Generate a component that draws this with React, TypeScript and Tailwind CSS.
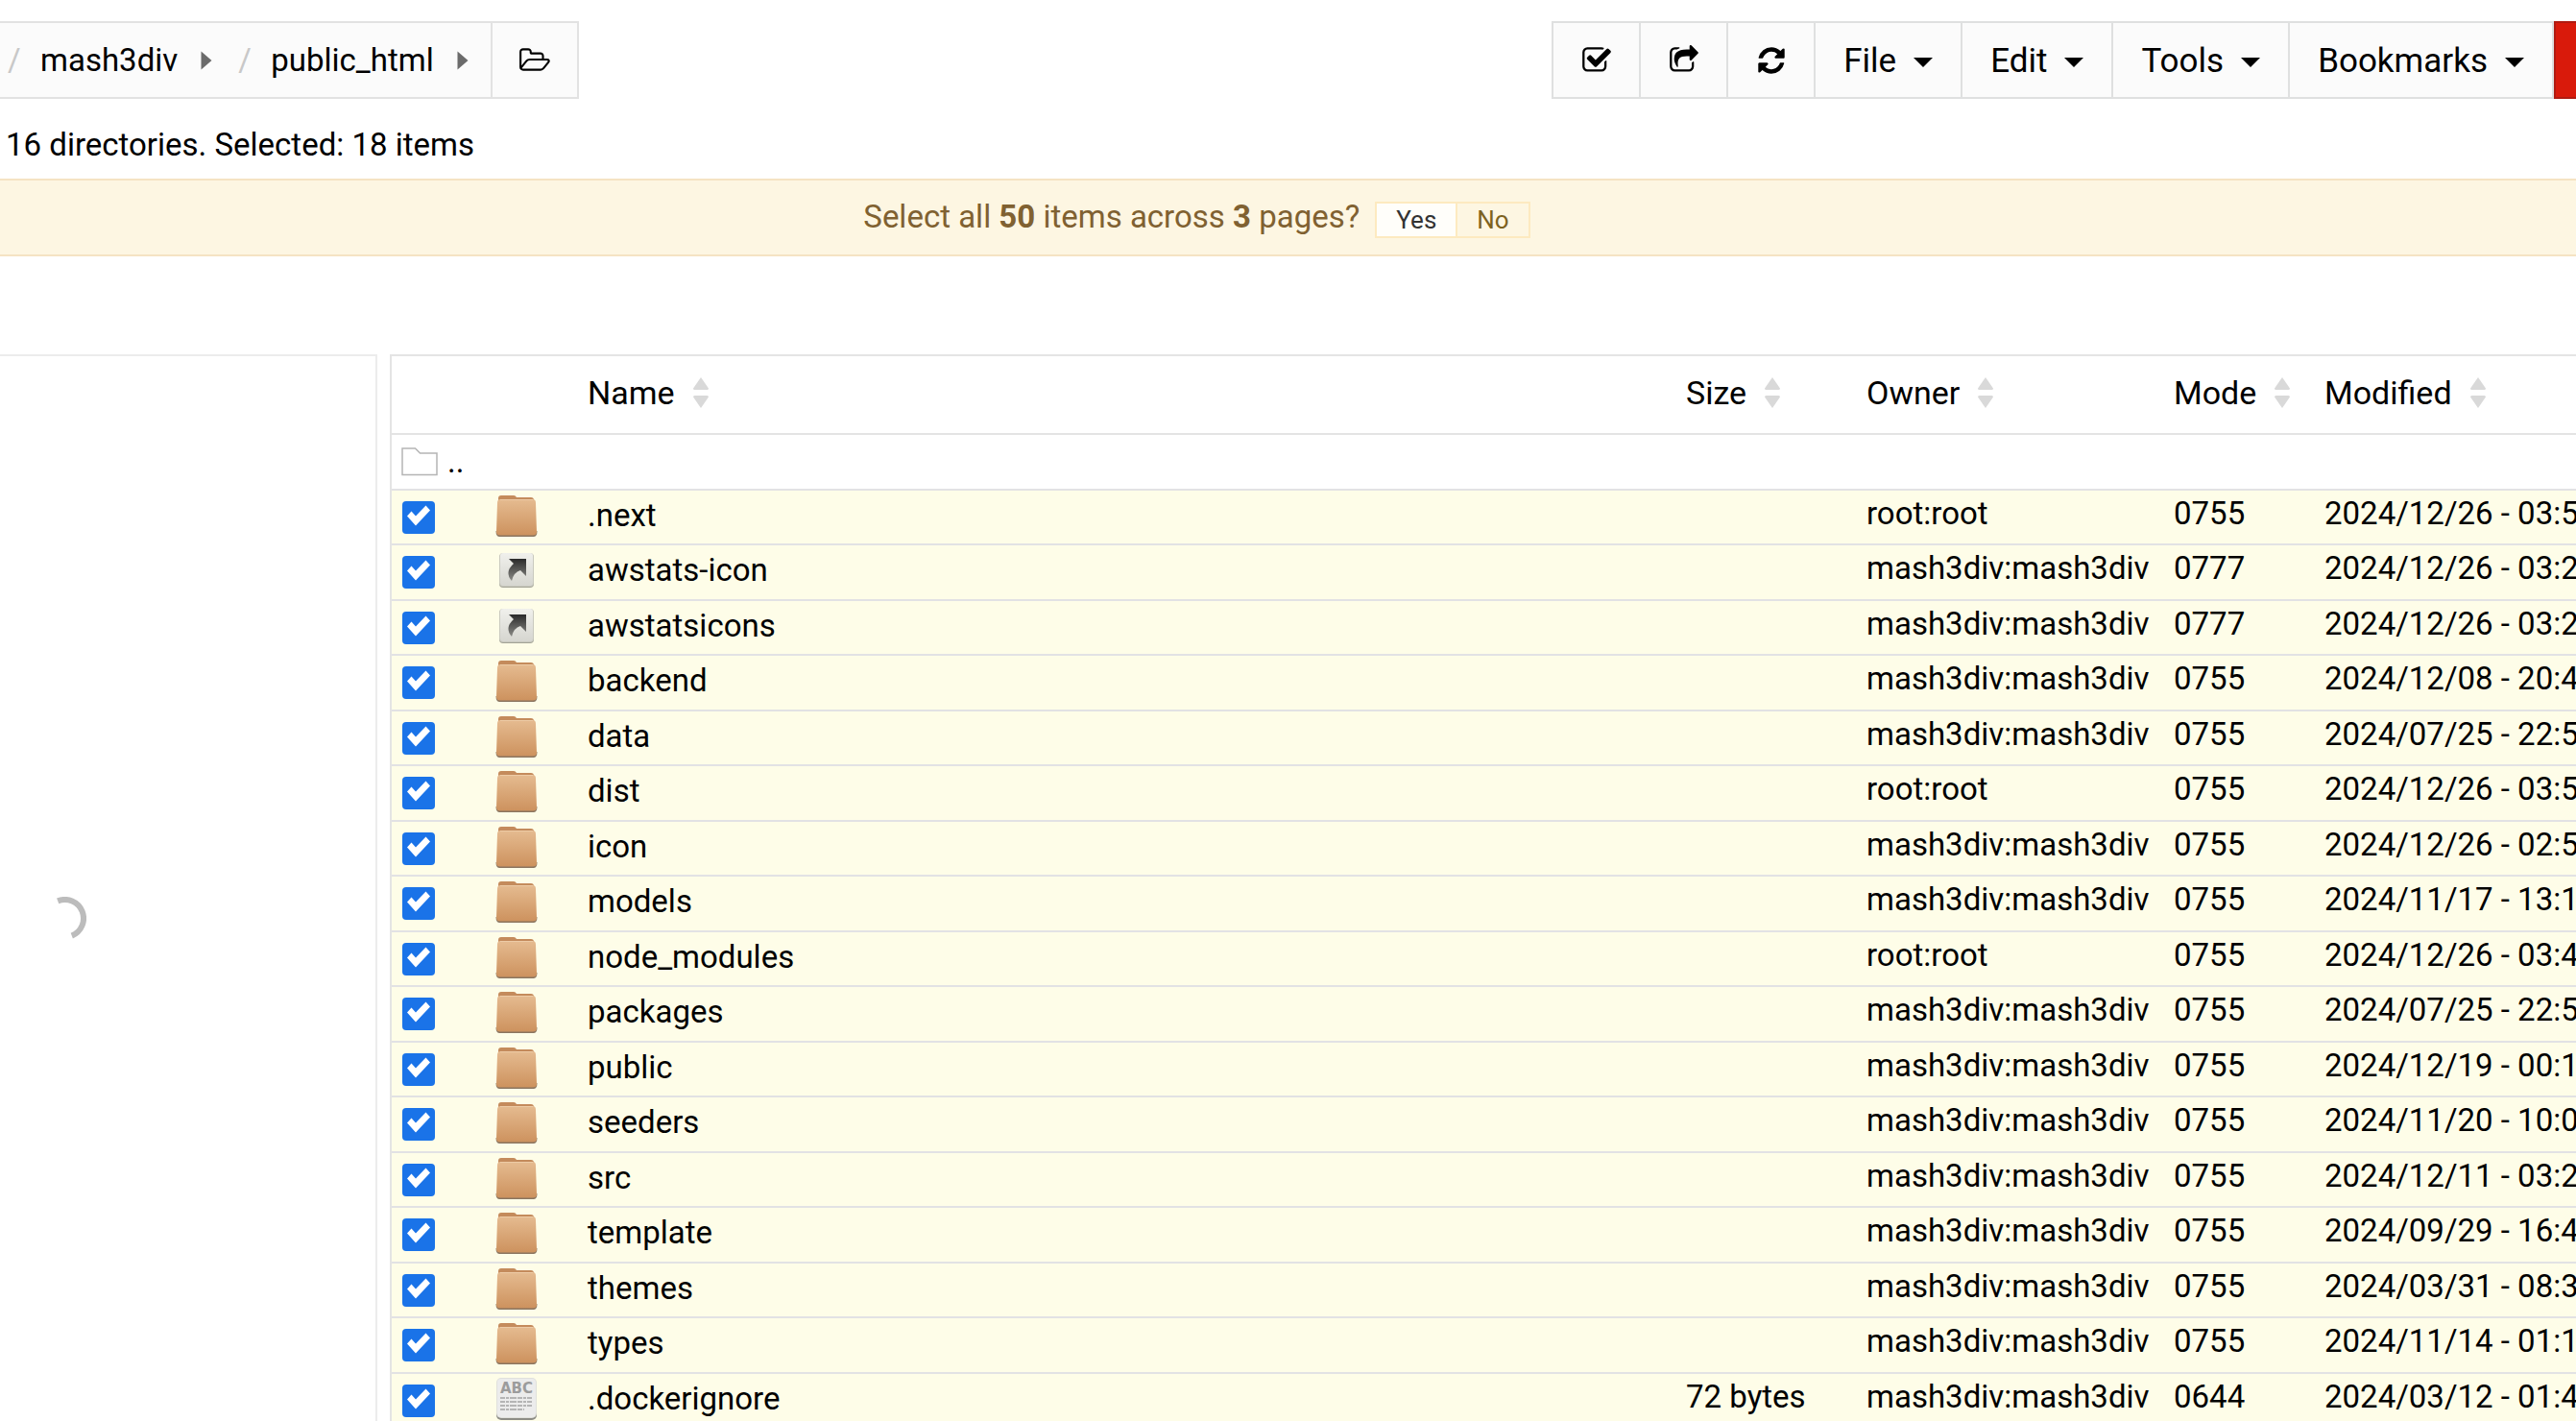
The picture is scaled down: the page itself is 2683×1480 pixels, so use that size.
import React from "react";

type Kind = "folder" | "link" | "text";
type Entry = { kind: Kind; name: string; size?: string; owner: string; mode: string; modified: string };

const me = "mash3div:mash3div";
const root = "root:root";

const entries: Entry[] = [
  { kind: "folder", name: ".next", owner: root, mode: "0755", modified: "2024/12/26 - 03:50" },
  { kind: "link", name: "awstats-icon", owner: me, mode: "0777", modified: "2024/12/26 - 03:26" },
  { kind: "link", name: "awstatsicons", owner: me, mode: "0777", modified: "2024/12/26 - 03:26" },
  { kind: "folder", name: "backend", owner: me, mode: "0755", modified: "2024/12/08 - 20:41" },
  { kind: "folder", name: "data", owner: me, mode: "0755", modified: "2024/07/25 - 22:50" },
  { kind: "folder", name: "dist", owner: root, mode: "0755", modified: "2024/12/26 - 03:50" },
  { kind: "folder", name: "icon", owner: me, mode: "0755", modified: "2024/12/26 - 02:53" },
  { kind: "folder", name: "models", owner: me, mode: "0755", modified: "2024/11/17 - 13:13" },
  { kind: "folder", name: "node_modules", owner: root, mode: "0755", modified: "2024/12/26 - 03:46" },
  { kind: "folder", name: "packages", owner: me, mode: "0755", modified: "2024/07/25 - 22:51" },
  { kind: "folder", name: "public", owner: me, mode: "0755", modified: "2024/12/19 - 00:17" },
  { kind: "folder", name: "seeders", owner: me, mode: "0755", modified: "2024/11/20 - 10:02" },
  { kind: "folder", name: "src", owner: me, mode: "0755", modified: "2024/12/11 - 03:21" },
  { kind: "folder", name: "template", owner: me, mode: "0755", modified: "2024/09/29 - 16:43" },
  { kind: "folder", name: "themes", owner: me, mode: "0755", modified: "2024/03/31 - 08:33" },
  { kind: "folder", name: "types", owner: me, mode: "0755", modified: "2024/11/14 - 01:19" },
  { kind: "text", name: ".dockerignore", size: "72 bytes", owner: me, mode: "0644", modified: "2024/03/12 - 01:43" },
];

const CheckSquare = () => (
  <svg className="size-8" viewBox="0 0 1792 1792" fill="currentColor" aria-hidden="true">
    <path d="M1472 930v318q0 119-84.5 203.5t-203.5 84.5h-832q-119 0-203.5-84.5t-84.5-203.5v-832q0-119 84.5-203.5t203.5-84.5h832q63 0 117 25 15 7 18 23 3 17-9 29l-49 49q-10 10-23 10-3 0-9-2-23-6-45-6h-832q-66 0-113 47t-47 113v832q0 66 47 113t113 47h832q66 0 113-47t47-113v-254q0-13 9-22l64-64q10-10 23-10 6 0 12 3 20 8 20 29zm231-489l-814 814q-24 24-57 24t-57-24l-430-430q-24-24-24-57t24-57l110-110q24-24 57-24t57 24l263 263 647-647q24-24 57-24t57 24l110 110q24 24 24 57t-24 57z" />
  </svg>
);

const ShareSquare = () => (
  <svg className="size-8" viewBox="0 0 1792 1792" fill="currentColor" aria-hidden="true">
    <path d="M1472 989v259q0 119-84.5 203.5t-203.5 84.5h-832q-119 0-203.5-84.5t-84.5-203.5v-832q0-119 84.5-203.5t203.5-84.5h255q13 0 22.5 9.5t9.5 22.5q0 27-26 32-77 26-133 60-10 4-16 4h-112q-66 0-113 47t-47 113v832q0 66 47 113t113 47h832q66 0 113-47t47-113v-214q0-19 18-29 28-13 54-37 16-16 35-8 21 9 21 31zm237-496l-384 384q-18 19-45 19-12 0-25-5-39-17-39-59v-192h-160q-323 0-438 131-119 137-74 473 3 23-20 34-8 2-12 2-16 0-26-13-10-14-21-31t-39.5-68.5-49.5-99.5-38.5-114-17.5-122q0-49 3.5-91t14-90 28-88 47-81.5 68.5-74 94.5-61.5 124.5-48.5 159.5-30.5 196.5-11h160v-192q0-42 39-59 13-5 25-5 26 0 45 19l384 384q19 19 19 45t-19 45z" />
  </svg>
);

const Refresh = () => (
  <svg className="size-8" viewBox="-128 -128 1792 1792" fill="currentColor" aria-hidden="true">
    <path d="M1511 928q0 5-1 7-64 268-268 434.5t-478 166.5q-146 0-282.5-55t-243.5-157l-129 129q-19 19-45 19t-45-19-19-45v-448q0-26 19-45t45-19h448q26 0 45 19t19 45-19 45l-137 137q71 66 161 102t187 36q134 0 250-65t186-179q11-17 53-117 8-23 30-23h192q13 0 22.5 9.5t9.5 22.5zm25-800v448q0 26-19 45t-45 19h-448q-26 0-45-19t-19-45 19-45l138-138q-148-137-349-137-134 0-250 65t-186 179q-11 17-53 117-8 23-30 23h-199q-13 0-22.5-9.5t-9.5-22.5v-7q65-268 270-434.5t480-166.5q146 0 284 55.5t245 156.5l130-129q19-19 45-19t45 19 19 45z" />
  </svg>
);

const FolderOpen = () => (
  <svg className="h-[30px] w-[34px]" viewBox="0 0 2048 1792" fill="currentColor" aria-hidden="true">
    <path d="M1845 931q0-35-53-35h-1088q-40 0-85.5 21.5t-71.5 52.5l-294 363q-18 24-18 40 0 35 53 35h1088q40 0 86-22t71-53l294-363q18-22 18-39zm-1141-163h768v-160q0-40-28-68t-68-28h-576q-40 0-68-28t-28-68v-64q0-40-28-68t-68-28h-320q-40 0-68 28t-28 68v853l256-315q44-53 116-87.5t140-34.5zm1269 163q0 62-46 120l-295 363q-43 53-116 87.5t-140 34.5h-1088q-92 0-158-66t-66-158v-960q0-92 66-158t158-66h320q92 0 158 66t66 158v32h544q92 0 158 66t66 158v160h192q54 0 99 24.5t67 70.5q15 32 15 68z" />
  </svg>
);

const CaretRight = () => (
  <svg className="h-5 w-3" viewBox="0 0 12 20" fill="#6b6b6b" aria-hidden="true">
    <path d="M0.5 0.5 11.5 10 0.5 19.5z" />
  </svg>
);

const CaretDown = () => (
  <svg className="mt-[2px] h-[10px] w-5" viewBox="0 0 20 10" fill="currentColor" aria-hidden="true">
    <path d="M0 0h20L10 10z" />
  </svg>
);

const SortIcon = () => (
  <svg className="h-8 w-4" viewBox="0 0 16 32" fill="#d9d9d9" aria-hidden="true">
    <path d="M8 0 16 11.500Q16 13 14.500 13H1.500Q0 13 0 11.500zM8 32 16 20.500Q16 19 14.500 19H1.500Q0 19 0 20.500z" />
  </svg>
);

const FolderIcon = () => (
  <svg className="size-[44px]" viewBox="0 0 44 44" aria-hidden="true">
    <defs>
      <linearGradient id="folder-face" x1="0" y1="0" x2="0" y2="1">
        <stop offset="0" stopColor="#e5bb90" />
        <stop offset="1" stopColor="#cd925e" />
      </linearGradient>
    </defs>
    <path d="M0.500 38q0 6 4 6h35q4 0 4-6z" fill="#8a7560" />
    <path d="M3 8V4q0-3 3-3h13q2 0 3 2h15q3 0 3 3v3z" fill="#c48b5c" />
    <path d="M5 5h34q3 0 3 4l1 30q0 3.500-4 3.500H5q-4 0-4-3.500L2 9q0-4 3-4z" fill="url(#folder-face)" />
    <path d="M5 5.500h34" stroke="#edcba6" strokeWidth="1" />
  </svg>
);

const LinkIcon = () => (
  <svg className="size-[44px]" viewBox="0 0 44 44" aria-hidden="true">
    <defs>
      <linearGradient id="link-face" x1="0" y1="0" x2="0" y2="1">
        <stop offset="0" stopColor="#f0f0ec" />
        <stop offset="1" stopColor="#d6d6d0" />
      </linearGradient>
      <linearGradient id="link-arrow" x1="0" y1="0" x2="0" y2="1">
        <stop offset="0" stopColor="#2a2a2a" />
        <stop offset="1" stopColor="#8a8a86" />
      </linearGradient>
    </defs>
    <rect x="4" y="5" width="36" height="35" rx="4" fill="#a3a396" />
    <rect x="4" y="4" width="36" height="35" rx="4" fill="#c9c9bf" />
    <rect x="5" y="4" width="34" height="34" rx="3" fill="url(#link-face)" />
    <path d="M14 10h18v18l-6-6q-7 2-9 11-8-9 2-18z" fill="url(#link-arrow)" />
  </svg>
);

const TextIcon = () => (
  <svg className="size-[44px]" viewBox="0 0 44 44" aria-hidden="true">
    <rect x="1" y="4" width="42" height="40" rx="5" fill="#8d8d86" />
    <rect x="1" y="0" width="42" height="42" rx="5" fill="#e0e0dc" />
    <rect x="2" y="1" width="40" height="40" rx="4" fill="#ececec" />
    <text x="22" y="16" textAnchor="middle" fontFamily="DejaVu Sans" fontSize="15" fontWeight="700" fill="#9c9c9c">
      ABC
    </text>
    <path d="M5 21h33M5 25h33M5 29h33M5 33h25" stroke="#a3a3a3" strokeWidth="1.500" strokeDasharray="5 1 3 1 7 1" />
  </svg>
);

const ParentFolder = () => (
  <svg className="h-[30px] w-[38px]" viewBox="0 0 38 30" fill="none" stroke="#b5b5b5" strokeWidth="1.500" aria-hidden="true">
    <path d="M1 1h13.500l5 5H37v22.500H1z" />
  </svg>
);

const icons: Record<Kind, () => React.JSX.Element> = { folder: FolderIcon, link: LinkIcon, text: TextIcon };

const toolButton = "-ml-[2px] flex items-center border-2 border-[#dfe0e0] bg-[#fbfbfb]";

function Crumb({ name }: { name: string }) {
  return (
    <li className="flex items-center">
      <span className="w-[34px] text-[#c8c8c8]">/</span>
      <a href="#" className="mr-6">{name}</a>
      <button type="button" aria-label={`Browse ${name}`} className="mr-[23px]">
        <CaretRight />
      </button>
    </li>
  );
}

function Menu({ label }: { label: string }) {
  return (
    <button type="button" className={`${toolButton} gap-[18px] px-[29px] pt-[2px] text-[35px]`}>
      {label}
      <CaretDown />
    </button>
  );
}

function Th({ children }: { children: string }) {
  return (
    <th scope="col" className="p-0 pb-1 text-left font-normal">
      <button type="button" className="flex items-center gap-[19px] text-[34px] whitespace-nowrap">
        {children}
        <SortIcon />
      </button>
    </th>
  );
}

function Tick({ label }: { label: string }) {
  return (
    <label className="grid size-[34px]">
      <input
        type="checkbox"
        defaultChecked
        aria-label={label}
        className="peer col-start-1 row-start-1 size-[34px] appearance-none rounded-[4px] border-2 border-[#767676] checked:border-0 checked:bg-[#1a73e8]"
      />
      <svg className="pointer-events-none invisible col-start-1 row-start-1 size-[34px] peer-checked:visible" viewBox="0 0 34 34" fill="#fff" aria-hidden="true">
        <path d="M5 15.500 9.500 10.500 14 15.500 24.500 4.500 29 9.500 14 25.500z" />
      </svg>
    </label>
  );
}

export default function App() {
  return (
    <div className="flex h-screen flex-col overflow-hidden bg-white font-['Roboto',sans-serif] text-[33px] leading-[40px] text-black">
      <header className="flex justify-between pt-[22px]">
        <nav aria-label="Path" className="flex h-[81px]">
          <ol className="flex items-center gap-1 border-y-2 border-[#e2e2e2] bg-[#fbfbfb] pl-2">
            <Crumb name="mash3div" />
            <Crumb name="public_html" />
          </ol>
          <button type="button" aria-label="Open folder" className="flex w-[92px] items-center justify-center border-2 border-[#e2e2e2] bg-[#fbfbfb]">
            <FolderOpen />
          </button>
        </nav>
        <div className="flex h-[81px]" role="toolbar" aria-label="Actions">
          <button type="button" aria-label="Select all" className={`${toolButton} w-[93px] justify-center`}>
            <CheckSquare />
          </button>
          <button type="button" aria-label="Share" className={`${toolButton} w-[93px] justify-center`}>
            <ShareSquare />
          </button>
          <button type="button" aria-label="Refresh" className={`${toolButton} w-[93px] justify-center`}>
            <Refresh />
          </button>
          <Menu label="File" />
          <Menu label="Edit" />
          <Menu label="Tools" />
          <Menu label="Bookmarks" />
          <button type="button" aria-label="Delete" className="w-[23px] border-2 border-r-0 border-[#b01b12] bg-[#d91a0b]" />
        </div>
      </header>

      <p className="mt-7 pl-[6px]">16 directories. Selected: 18 items</p>

      <div className="mt-[15px] flex h-[81px] items-center justify-center gap-4 border-y-2 border-[#f5e3c3] bg-[#fdf6e2] pr-[190px] text-[#806131]">
        <span className="pb-[2px]">
          Select all <b>50</b> items across <b>3</b> pages?
        </span>
        <span className="mt-1 flex h-[38px] text-[26px] leading-[34px]">
          <button type="button" className="border-2 border-[#fdeac0] bg-[#fffefa] px-5 text-[#333]">Yes</button>
          <button type="button" className="-ml-[2px] border-2 border-[#fdeac0] px-5 text-[#7d621f]">No</button>
        </span>
      </div>

      <main className="mt-[102px] flex min-h-0 flex-1">
        <aside className="w-[393px] shrink-0 border-t-2 border-r-2 border-[#ececec]">
          <div role="status" aria-label="Loading" className="mt-[563px] ml-[45px]">
            <svg className="size-[45px]" viewBox="0 0 45 45" fill="none" stroke="#bcbcbc" strokeWidth="6" aria-hidden="true">
              <path d="M15.200 4.400A19.500 19.500 0 0 1 29.800 40.600" />
            </svg>
          </div>
        </aside>
        <div className="ml-[13px] min-w-0 flex-1 overflow-hidden border-t-2 border-l-2 border-[#e4e4e4]">
          <table className="w-full table-fixed border-collapse">
            <colgroup>
              <col className="w-[108px]" />
              <col className="w-[96px]" />
              <col />
              <col className="w-[188px]" />
              <col className="w-[320px]" />
              <col className="w-[157px]" />
              <col className="w-[262px]" />
            </colgroup>
            <thead>
              <tr className="h-[81px] border-b-2 border-[#e4e4e4]">
                <td />
                <td />
                <Th>Name</Th>
                <Th>Size</Th>
                <Th>Owner</Th>
                <Th>Mode</Th>
                <Th>Modified</Th>
              </tr>
            </thead>
            <tbody>
              <tr className="h-[58px] border-b-2 border-[#e2e2e4]">
                <td colSpan={7} className="p-0 pl-[10px]">
                  <a href="#" className="flex items-center gap-[10px]" aria-label="Parent directory">
                    <ParentFolder />
                    <span>..</span>
                  </a>
                </td>
              </tr>
              {entries.map((e) => {
                const Icon = icons[e.kind];
                return (
                  <tr key={e.name} className="h-[57px] border-b-2 border-[#e2e2e4] bg-[#fefde8] odd:h-[58px]">
                    <td className="p-0 pl-[11px]">
                      <Tick label={`Select ${e.name}`} />
                    </td>
                    <td className="p-0 pb-1">
                      <Icon />
                    </td>
                    <td className="p-0 pb-1">
                      <a href="#">{e.name}</a>
                    </td>
                    <td className="p-0 pb-2">{e.size}</td>
                    <td className="p-0 pb-2">{e.owner}</td>
                    <td className="p-0 pb-2">{e.mode}</td>
                    <td className="overflow-hidden p-0 pb-2 whitespace-nowrap">{e.modified}</td>
                  </tr>
                );
              })}
            </tbody>
          </table>
        </div>
      </main>
    </div>
  );
}
